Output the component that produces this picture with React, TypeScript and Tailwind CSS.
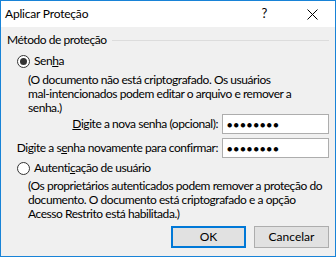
import React from "react";

function Radio({ checked }: { checked?: boolean }) {
  return (
    <span className="flex h-[13px] w-[13px] shrink-0 items-center justify-center rounded-full border border-[#333333] bg-white">
      {checked && <span className="h-[7px] w-[7px] rounded-full bg-[#333333]" />}
    </span>
  );
}

function PasswordBox() {
  return (
    <div className="flex h-[20px] w-[107px] shrink-0 items-center border border-[#adadad] bg-white pl-[4px]">
      <span className="text-[9px] leading-none tracking-[1.2px] text-black">●●●●●●●●</span>
    </div>
  );
}

export default function App() {
  return (
    <div
      className="flex h-[257px] w-[336px] flex-col overflow-hidden border border-[#1883d7] text-[12px] tracking-[-0.45px] text-black"
      style={{ fontFamily: 'Lato, "Noto Sans", sans-serif' }}
    >
      <div className="flex h-[26px] shrink-0 items-center bg-white tracking-[-0.2px]">
        <span className="pl-[4px]">Aplicar Proteção</span>
        <span className="ml-auto mr-[40px] text-[13px]">?</span>
        <svg width="11" height="11" viewBox="0 0 11 11" className="mr-[17px]">
          <path d="M0.5 0.5 L10.5 10.5 M10.5 0.5 L0.5 10.5" stroke="#000" strokeWidth="1" />
        </svg>
      </div>
      <div className="flex flex-1 flex-col whitespace-nowrap bg-[#f0f0f0] pr-[6px] leading-[14px]">
        <div className="mt-[6px] flex items-center pl-[6px]">
          <span>Método de proteção</span>
          <span className="ml-[5px] h-px flex-1 bg-[#dcdcdc]" />
        </div>
        <div className="mt-[7px] flex items-center gap-[4px] pl-[16px]">
          <Radio checked />
          <span>
            Sen<span className="underline">h</span>a
          </span>
        </div>
        <p className="mt-[5px] pl-[27px]">
          (O documento não está criptografado. Os usuários
          <br />
          mal-intencionados podem editar o arquivo e remover a
          <br />
          senha.)
        </p>
        <div className="mt-[-1px] flex items-center justify-end gap-[4px]">
          <span>
            <span className="underline">D</span>igite a nova senha (opcional):
          </span>
          <PasswordBox />
        </div>
        <div className="mt-[4px] flex items-center justify-end gap-[4px]">
          <span>
            Digite a s<span className="underline">e</span>nha novamente para confirmar:
          </span>
          <PasswordBox />
        </div>
        <div className="mt-[3px] flex items-center gap-[4px] pl-[16px]">
          <Radio />
          <span>
            Autenti<span className="underline">c</span>ação de usuário
          </span>
        </div>
        <p className="mt-[4px] pl-[27px]">
          (Os proprietários autenticados podem remover a proteção do
          <br />
          documento. O documento está criptografado e a opção
          <br />
          Acesso Restrito está habilitada.)
        </p>
        <div className="mt-[5px] flex justify-end gap-[8px] tracking-normal">
          <button className="h-[22px] w-[75px] border-2 border-[#0078d7] bg-[#e1e1e1]">OK</button>
          <button className="h-[22px] w-[75px] border border-[#adadad] bg-[#e1e1e1]">Cancelar</button>
        </div>
      </div>
    </div>
  );
}
